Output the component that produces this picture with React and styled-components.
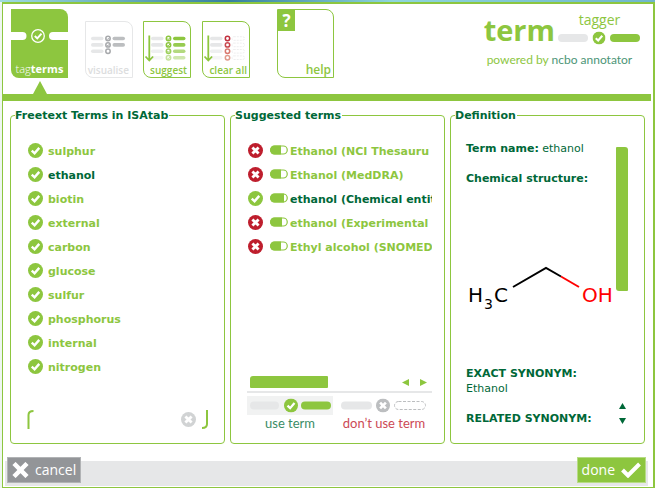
import React, { useState } from "react";
import styled, { createGlobalStyle } from "styled-components";

const green = "#8dc63f";
const dark = "#006838";
const red = "#be1e2d";
const grey = "#e6e7e8";
const uiFont = `Verdana, "DejaVu Sans", sans-serif`;
const brandFont = `"Open Sans", "Noto Sans", sans-serif`;

const GlobalStyle = createGlobalStyle`
  * { box-sizing: border-box; }
  body { margin: 0; background: #fff; }
  button, input { font: inherit; margin: 0; }
  svg { display: block; flex: none; }
`;

const Desktop = styled.div`
  min-height: 100vh;
  display: flex;
  padding: 0 0 0 2px;
  background: linear-gradient(90deg, #9fdcdf, #35809f 35%, #8fd6dc 60%, #6fb6cc) 0 0 / 100% 2px no-repeat, #eef6f1;
`;

const Window = styled.main`
  flex: 1;
  min-width: 0;
  display: flex;
  flex-direction: column;
  margin-top: 2px;
  border: solid ${green};
  border-width: 2px 2px 1px 1px;
  background: #fff;
  font-family: ${uiFont};
  font-size: 11px;
  color: ${dark};
`;

const Header = styled.header`
  display: flex;
  align-items: flex-start;
  justify-content: space-between;
  height: 90px;
  padding: 5px 12px 0 8px;
`;

const Toolbar = styled.nav`
  display: flex;
  align-items: flex-end;
  height: 69px;
`;

const ActiveTool = styled.div`
  display: flex;
  flex-direction: column;
  align-items: center;
  align-self: flex-start;
  margin-right: 17px;
`;

const Tile = styled.button`
  display: flex;
  flex-direction: column;
  justify-content: space-between;
  align-items: ${(p) => (p.$filled ? "center" : "flex-end")};
  width: ${(p) => (p.$large ? 57 : 48)}px;
  height: ${(p) => (p.$large ? 69 : 57)}px;
  margin-right: ${(p) => p.$gap || 0}px;
  padding: 0;
  overflow: hidden;
  border: ${(p) => (p.$filled ? "0" : `1px solid ${p.$muted ? grey : green}`)};
  border-radius: 0 8px 0 8px;
  background: ${(p) => (p.$filled ? green : "#fff")};
  color: ${(p) => (p.$filled ? "#fff" : p.$muted ? "#dcddde" : green)};
  font-family: ${brandFont};
  line-height: 14px;
`;

const TileLabel = styled.span`
  font-size: ${(p) => p.$size || 10}px;
  font-weight: ${(p) => p.$weight || 600};
  padding: 0 ${(p) => p.$right || 0}px ${(p) => p.$bottom || 0}px 0;
`;

const Strong = styled.b`
  font-weight: 700;
`;

const HelpMark = styled.span`
  align-self: flex-start;
  width: 17px;
  height: 21px;
  background: ${green};
  color: #fff;
  font-size: 17px;
  font-weight: 700;
  line-height: 21px;
  text-align: center;
`;

const Pointer = styled.span`
  margin-top: 3px;
  border: 7px solid transparent;
  border-top: 0;
  border-bottom: 13px solid ${green};
`;

const Brand = styled.div`
  font-family: ${brandFont};
  color: ${green};
`;

const BrandTop = styled.div`
  display: flex;
  align-items: flex-end;
  gap: 3px;
`;

const BrandName = styled.h1`
  margin: 0;
  font-size: 29px;
  line-height: 42px;
  font-weight: 700;
`;

const BrandSide = styled.div`
  display: flex;
  flex-direction: column;
  align-items: center;
  gap: 2px;
  padding-bottom: 6px;
  font-size: 14px;
  line-height: 18px;
`;

const Powered = styled.p`
  margin: 1px 0 0 3px;
  font-family: Lato, ${brandFont};
  font-size: 12px;
  line-height: 15px;
  font-weight: 400;
`;

const PoweredName = styled.span`
  color: #4c9577;
`;

const Divider = styled.div`
  height: 7px;
  margin-right: 2px;
  background: ${green};
`;

const Panels = styled.div`
  flex: 1;
  display: grid;
  grid-template-columns: 215fr 215fr 195fr;
  gap: 5px;
  padding: 8px 8px 17px 7px;
`;

const Panel = styled.fieldset`
  min-width: 0;
  margin: 0;
  padding: 0 12px ${(p) => p.$bottom || 13}px 15px;
  border: 1px solid ${green};
  border-radius: 4px;
`;

const Legend = styled.legend`
  margin-left: -11px;
  padding: 0 1px 0 0;
  font-weight: 700;
  line-height: 13px;
`;

const PanelBody = styled.div`
  display: flex;
  flex-direction: column;
  justify-content: space-between;
  height: 100%;
  padding-top: 16px;
`;

const TermList = styled.ul`
  margin: 0;
  padding: 0;
  list-style: none;
`;

const TermRow = styled.li`
  display: flex;
`;

const TermButton = styled.button`
  display: flex;
  align-items: center;
  width: 100%;
  height: 24px;
  padding: 0 0 0 2px;
  border: 0;
  background: none;
  color: ${(p) => (p.$selected ? dark : green)};
  font-weight: 700;
  text-align: left;
  white-space: nowrap;
`;

const TermName = styled.span`
  flex: 1;
  min-width: 0;
  margin-left: ${(p) => p.$gap}px;
  padding-top: 4px;
  overflow: hidden;
  line-height: 16px;
`;

const CapsuleIcon = styled.svg`
  margin-left: 7px;
`;

const Filter = styled.label`
  display: flex;
  align-items: center;
  padding: 0 4px 1px 1px;
`;

const FilterInput = styled.input`
  flex: 1;
  min-width: 0;
  height: 18px;
  padding: 0 4px;
  border: 0;
  outline: 0;
  background: none;
  color: ${dark};
`;

const ClearButton = styled.button`
  padding: 0;
  margin-right: 6px;
  border: 0;
  background: none;
`;

const Controls = styled.div`
  padding-left: 1px;
`;

const ScrollRow = styled.div`
  display: flex;
  align-items: center;
  gap: 11px;
  padding: 0 5px 3px 3px;
  border-bottom: 2px solid ${grey};
`;

const Thumb = styled.div`
  width: 78px;
  height: 12px;
  margin-right: auto;
  border-radius: 3px 1px 1px 1px;
  background: ${green};
`;

const ArrowButton = styled.button`
  padding: 0;
  border: 0;
  background: none;
`;

const Choices = styled.div`
  display: grid;
  grid-template-columns: 86px 1fr;
  gap: 3px;
  padding-top: 3px;
`;

const Choice = styled.button`
  display: flex;
  flex-direction: column;
  align-items: center;
  padding: 0;
  border: 0;
  background: none;
  color: ${(p) => p.$color};
  font-family: Lato, "Open Sans", sans-serif;
  font-size: 13px;
  line-height: 17px;
  white-space: nowrap;
`;

const ChoiceArt = styled.span`
  display: flex;
  align-items: center;
  justify-content: center;
  width: 100%;
  height: 19px;
  background: ${(p) => (p.$on ? "#f1f2f2" : "none")};
`;

const Definition = styled.div`
  display: flex;
  justify-content: space-between;
  height: 100%;
  padding-top: 19px;
`;

const Details = styled.div`
  flex: 1;
  min-width: 0;
`;

const Line = styled.p`
  margin: 0 0 ${(p) => (p.$tight ? 0 : 15)}px;
  line-height: 15px;
  white-space: nowrap;
`;

const Molecule = styled.svg`
  margin: -15px 0 0 2px;
  overflow: visible;
`;

const ScrollColumn = styled.div`
  display: flex;
  flex-direction: column;
  align-items: center;
  gap: 8px;
  padding: 6px 4px 5px 0;
`;

const TallThumb = styled.div`
  width: 12px;
  height: 144px;
  margin-bottom: auto;
  border-radius: 1px 3px 1px 3px;
  background: ${green};
`;

const Footer = styled.footer`
  display: flex;
  align-items: flex-start;
  justify-content: space-between;
  height: 25px;
  margin: 0 5px 1px 2px;
  padding: 0 2px;
  background: ${grey};
`;

const FooterButton = styled.button`
  display: flex;
  align-items: center;
  gap: 6px;
  height: 26px;
  margin-top: -4px;
  padding: 0 4px;
  border: 1px solid ${(p) => (p.$primary ? "#b7dc85" : "#b1b3b5")};
  background: ${(p) => (p.$primary ? green : "#939598")};
  color: #fff;
  font-family: ${brandFont};
  font-size: 14px;
  line-height: 20px;
`;

function Badge({ kind = "check", color = green, size = 15 }) {
  return (
    <svg width={size} height={size} viewBox="0 0 16 16" aria-hidden="true">
      <circle cx="8" cy="8" r="8" fill={color} />
      {kind === "check" ? (
        <path d="M4 8.2 7 11l5-5.8" fill="none" stroke="#fff" strokeWidth="2.6" />
      ) : (
        <path d="m4.7 4.7 6.6 6.6m0-6.6-6.6 6.6" fill="none" stroke="#fff" strokeWidth="3" />
      )}
    </svg>
  );
}

function Capsule({ level }) {
  return (
    <CapsuleIcon width="18" height="10" viewBox="0 0 18 10" aria-hidden="true">
      <rect x=".75" y="1" width="16.5" height="8" rx="4" fill="#fff" stroke={green} strokeWidth="1.2" />
      <path d={`M${level} 0.5H4.5a4.5 4.5 0 0 0 0 9H${level}z`} fill={green} />
    </CapsuleIcon>
  );
}

function TagArt() {
  return (
    <svg width="57" height="22" viewBox="0 0 57 22" aria-hidden="true">
      <path d="M0 7h11.5a4 4 0 0 1 0 8H0zM57 7H42a4 4 0 0 0 0 8h15z" fill="#fff" />
      <circle cx="27" cy="11" r="6.3" fill="none" stroke="#fff" strokeWidth="1.3" />
      <path d="m23.8 11 2.5 2.4 4.2-4.7" fill="none" stroke="#fff" strokeWidth="2" />
    </svg>
  );
}

const listArt = {
  visualise: {
    left: [grey, grey, grey],
    ring: ["#a7a9ac", "#a7a9ac", "#a7a9ac"],
    right: ["#bcbec0", "#bcbec0", null],
    ticks: 2,
  },
  suggest: {
    left: [grey, grey, "#eeeff0", "#f5f5f6"],
    ring: [green, green, "#9ccf5b", "#c5e29c"],
    right: [green, "#97cb50", "#b3d97f", "#cfe7ae"],
    ticks: 4,
    arrow: true,
  },
  clear: {
    left: [grey, grey, "#eeeff0", "#f5f5f6"],
    ring: ["#c1313f", "#c94a50", "#d9796f", "#e09a8c"],
    right: [],
    ticks: 0,
    arrow: true,
  },
};

function ListArt({ kind }) {
  const a = listArt[kind];
  return (
    <svg width="46" height="41" viewBox="0 0 46 41" aria-hidden="true">
      {a.left.map((fill, i) => {
        const y = 16.5 + i * 6.4;
        return (
          <g key={i}>
            <rect x={a.arrow ? 7 : 5} y={y - 1.8} width="12.5" height="3.6" rx="1.8" fill={fill} />
            <circle cx={a.arrow ? 24.5 : 22} cy={y} r="2.2" fill="#fff" stroke={a.ring[i]} strokeWidth="1.5" />
            {i < a.ticks && <path d={`m${a.arrow ? 23.3 : 20.8} ${y} 1 1 1.8-2`} stroke={a.ring[i]} fill="none" />}
            {a.right[i] && <rect x={a.arrow ? 29 : 26.5} y={y - 1.8} width="12.5" height="3.6" rx="1.8" fill={a.right[i]} />}
            {kind === "clear" && (
              <rect x="29" y={y - 1.8} width="12.5" height="3.6" rx="1.8" fill="none" stroke={grey} strokeWidth=".7" strokeDasharray="2 1" />
            )}
          </g>
        );
      })}
      {a.arrow && <path d="M5.3 13.5V38.5M1.5 34.5l3.8 4 3.8-4" fill="none" stroke={green} strokeWidth="1.8" />}
    </svg>
  );
}

function PillTrio({ kind }) {
  const reject = kind === "cross";
  return (
    <svg width="86" height="15" viewBox="0 0 86 15" aria-hidden="true">
      <rect x={reject ? 0 : 3} y="3.5" width={reject ? 31 : 29} height="8" rx="4" fill={grey} />
      <svg x={reject ? 35 : 37} y=".5" width="14" height="14" viewBox="0 0 16 16">
        <Badge kind={kind} color={reject ? "#bcbec0" : green} size={16} />
      </svg>
      {reject ? (
        <rect x="53.5" y="3.5" width="31" height="8" rx="4" fill="none" stroke="#bcbec0" strokeDasharray="3 1.5" />
      ) : (
        <rect x="54" y="3.5" width="30" height="8" rx="4" fill={green} />
      )}
    </svg>
  );
}

function BrandArt() {
  return (
    <svg width="83" height="14" viewBox="0 0 83 14" aria-hidden="true">
      <rect x="0" y="3" width="30" height="8" rx="4" fill={grey} />
      <svg x="34.5" y=".5" width="13" height="13" viewBox="0 0 16 16">
        <Badge size={16} />
      </svg>
      <rect x="52" y="3" width="30" height="8" rx="4" fill={green} />
    </svg>
  );
}

const arrows = {
  left: "M7 0v7L0 3.5z",
  right: "M0 0v7l7-3.5z",
  up: "M0 6h7L3.5 0z",
  down: "M0 0h7L3.5 6z",
};

function Arrow({ dir, color }) {
  return (
    <svg width="7" height="7" viewBox="0 0 7 7" aria-hidden="true">
      <path d={arrows[dir]} fill={color} />
    </svg>
  );
}

const terms = ["sulphur", "ethanol", "biotin", "external", "carbon", "glucose", "sulfur", "phosphorus", "internal", "nitrogen"];
const suggestions = [
  { name: "Ethanol (NCI Thesauru", level: 11 },
  { name: "Ethanol (MedDRA)", level: 11 },
  { name: "ethanol (Chemical entit", level: 14 },
  { name: "ethanol (Experimental", level: 12 },
  { name: "Ethyl alcohol (SNOMED", level: 11 },
];

export default function App() {
  const [term, setTerm] = useState(1);
  const [used, setUsed] = useState(2);
  const [filter, setFilter] = useState("");

  return (
    <Desktop>
      <GlobalStyle />
      <Window>
        <Header>
          <Toolbar>
            <ActiveTool>
              <Tile $large $filled>
                <span />
                <TagArt />
                <TileLabel $size={11} $weight={300} $bottom={2}>tag<Strong>terms</Strong></TileLabel>
              </Tile>
              <Pointer />
            </ActiveTool>
            <Tile $muted $gap={10}>
              <ListArt kind="visualise" />
              <TileLabel $right={3}>visualise</TileLabel>
            </Tile>
            <Tile $gap={11}>
              <ListArt kind="suggest" />
              <TileLabel $right={3}>suggest</TileLabel>
            </Tile>
            <Tile $gap={27}>
              <ListArt kind="clear" />
              <TileLabel $right={2}>clear all</TileLabel>
            </Tile>
            <Tile $large>
              <HelpMark>?</HelpMark>
              <TileLabel $size={12} $right={2}>help</TileLabel>
            </Tile>
          </Toolbar>
          <Brand>
            <BrandTop>
              <BrandName>term</BrandName>
              <BrandSide>
                tagger
                <BrandArt />
              </BrandSide>
            </BrandTop>
            <Powered>powered by <PoweredName>ncbo annotator</PoweredName></Powered>
          </Brand>
        </Header>
        <Divider />
        <Panels>
          <Panel>
            <Legend>Freetext Terms in ISAtab</Legend>
            <PanelBody>
              <TermList>
                {terms.map((name, i) => (
                  <TermRow key={name}>
                    <TermButton $selected={i === term} onClick={() => setTerm(i)}>
                      <Badge />
                      <TermName $gap={5}>{name}</TermName>
                    </TermButton>
                  </TermRow>
                ))}
              </TermList>
              <Filter>
                <svg width="7" height="19" viewBox="0 0 7 19" aria-hidden="true">
                  <path d="M1.5 19V5q0-4 5-4" fill="none" stroke={green} strokeWidth="2" />
                </svg>
                <FilterInput aria-label="Filter terms" value={filter} onChange={(e) => setFilter(e.target.value)} />
                <ClearButton aria-label="Clear filter" onClick={() => setFilter("")}>
                  <Badge kind="cross" color="#d1d3d4" />
                </ClearButton>
                <svg width="6" height="19" viewBox="0 0 6 19" aria-hidden="true">
                  <path d="M5 0v14q0 4-5 4" fill="none" stroke={green} strokeWidth="2" />
                </svg>
              </Filter>
            </PanelBody>
          </Panel>

          <Panel $bottom={11}>
            <Legend>Suggested terms</Legend>
            <PanelBody>
              <TermList>
                {suggestions.map(({ name, level }, i) => (
                  <TermRow key={name}>
                    <TermButton $selected={i === used} onClick={() => setUsed(i)}>
                      <Badge kind={i === used ? "check" : "cross"} color={i === used ? green : red} />
                      <Capsule level={level} />
                      <TermName $gap={2}>{name}</TermName>
                    </TermButton>
                  </TermRow>
                ))}
              </TermList>
              <Controls>
                <ScrollRow>
                  <Thumb />
                  <ArrowButton aria-label="Scroll left"><Arrow dir="left" color={green} /></ArrowButton>
                  <ArrowButton aria-label="Scroll right"><Arrow dir="right" color={green} /></ArrowButton>
                </ScrollRow>
                <Choices>
                  <Choice $color="#3a8c66">
                    <ChoiceArt $on><PillTrio kind="check" /></ChoiceArt>
                    use term
                  </Choice>
                  <Choice $color="#cc4a55">
                    <ChoiceArt><PillTrio kind="cross" /></ChoiceArt>
                    don’t use term
                  </Choice>
                </Choices>
              </Controls>
            </PanelBody>
          </Panel>

          <Panel>
            <Legend>Definition</Legend>
            <Definition>
              <Details>
                <Line><b>Term name:</b> ethanol</Line>
                <Line><b>Chemical structure:</b></Line>
                <Molecule width="148" height="180" viewBox="0 0 148 180" role="img" aria-label="Structure of ethanol">
                  <g fontFamily="DejaVu Sans, sans-serif" fontSize="20">
                    <text x="0" y="116">H</text>
                    <text x="16" y="123" fontSize="14">3</text>
                    <text x="26" y="116">C</text>
                    <text x="114" y="116" fill="#f00">OH</text>
                  </g>
                  <path d="m45 101 33-19 15 8.5" fill="none" stroke="#000" strokeWidth="2" />
                  <path d="m93 90.5 18 10.5" stroke="#f00" strokeWidth="2" />
                </Molecule>
                <Line $tight><b>EXACT SYNONYM:</b></Line>
                <Line>Ethanol</Line>
                <Line $tight><b>RELATED SYNONYM:</b></Line>
              </Details>
              <ScrollColumn>
                <TallThumb />
                <ArrowButton aria-label="Scroll up"><Arrow dir="up" color={dark} /></ArrowButton>
                <ArrowButton aria-label="Scroll down"><Arrow dir="down" color={dark} /></ArrowButton>
              </ScrollColumn>
            </Definition>
          </Panel>
        </Panels>
        <Footer>
          <FooterButton>
            <svg width="17" height="16" viewBox="0 0 17 16" aria-hidden="true">
              <path d="m2 1.5 13 13m0-13-13 13" stroke="#fff" strokeWidth="4.5" />
            </svg>
            cancel
          </FooterButton>
          <FooterButton $primary>
            done
            <svg width="20" height="16" viewBox="0 0 20 16" aria-hidden="true">
              <path d="m1.5 8 5.5 5.5L18.5 2" fill="none" stroke="#fff" strokeWidth="4" />
            </svg>
          </FooterButton>
        </Footer>
      </Window>
    </Desktop>
  );
}
